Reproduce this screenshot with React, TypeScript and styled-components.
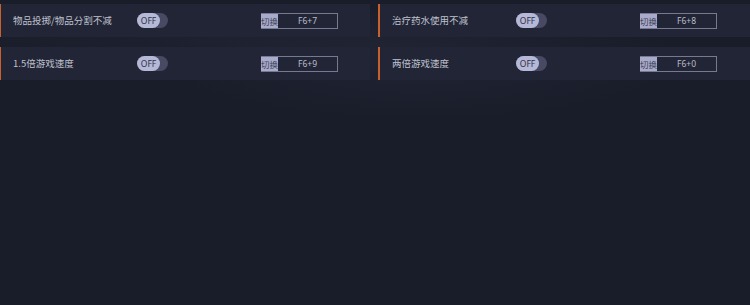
import React from "react";
import styled, { createGlobalStyle } from "styled-components";

const Global = createGlobalStyle`
  html, body {
    margin: 0;
    padding: 0;
    background: #191c29;
    width: 750px;
    height: 305px;
    overflow: hidden;
  }
  body {
    font-family: "Noto Sans CJK SC", "Noto Sans", sans-serif;
  }
`;

const Page = styled.div`
  width: 750px;
  height: 305px;
  background:
    radial-gradient(ellipse 260px 60px at 420px 60px, rgba(60, 64, 84, 0.22), transparent),
    radial-gradient(ellipse 300px 40px at 200px 40px, rgba(50, 54, 72, 0.18), transparent),
    #191c29;
  overflow: hidden;
`;

const Grid = styled.div`
  display: grid;
  grid-template-columns: 371px 374px;
  column-gap: 8px;
  row-gap: 10px;
  margin-left: -1px;
  padding-top: 4px;
`;

const Card = styled.div`
  display: flex;
  align-items: center;
  height: 33px;
  box-sizing: border-box;
  background: #222536;
  border-left: 2px solid #c9602c;
  padding-left: 12px;
`;

const Label = styled.div`
  width: 124px;
  flex-shrink: 0;
  color: #bfc1ce;
  font-size: 9.5px;
  line-height: 1;
  white-space: nowrap;
`;

const Toggle = styled.div`
  width: 31px;
  height: 15px;
  border-radius: 8px;
  background: #474a62;
  display: flex;
  align-items: center;
  margin-top: -1px;
`;

const Knob = styled.div`
  width: 23px;
  height: 15px;
  border-radius: 8px;
  background: #b6b8d8;
  color: #2e3044;
  font-family: "Noto Sans", sans-serif;
  font-size: 8.5px;
  display: flex;
  align-items: center;
  justify-content: center;
`;

const Hotkey = styled.div`
  margin-left: 93px;
  display: flex;
  width: 77px;
  height: 16px;
  box-sizing: border-box;
  border: 1px solid #767990;
  border-left: none;
`;

const HotkeyTag = styled.div`
  width: 17px;
  background: #a9abcc;
  color: #3c3e52;
  font-size: 8.5px;
  display: flex;
  align-items: center;
  justify-content: center;
  white-space: nowrap;
`;

const HotkeyValue = styled.div`
  flex: 1;
  color: #bcbecc;
  font-family: "Noto Sans", sans-serif;
  font-size: 8.5px;
  display: flex;
  align-items: center;
  justify-content: center;
`;

const items = [
  { label: "物品投掷/物品分割不减", key: "F6+7" },
  { label: "治疗药水使用不减", key: "F6+8" },
  { label: "1.5倍游戏速度", key: "F6+9" },
  { label: "两倍游戏速度", key: "F6+0" },
];

export default function App() {
  return (
    <Page>
      <Global />
      <Grid>
        {items.map((it) => (
          <Card key={it.key}>
            <Label>{it.label}</Label>
            <Toggle>
              <Knob>OFF</Knob>
            </Toggle>
            <Hotkey>
              <HotkeyTag>切换</HotkeyTag>
              <HotkeyValue>{it.key}</HotkeyValue>
            </Hotkey>
          </Card>
        ))}
      </Grid>
    </Page>
  );
}
